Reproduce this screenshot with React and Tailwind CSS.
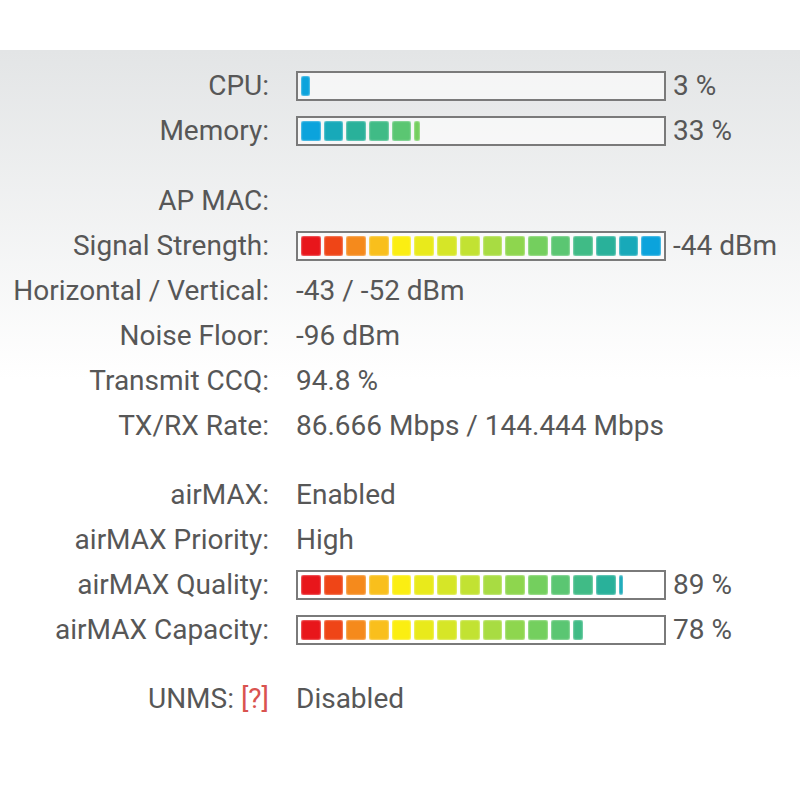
import React from "react";

const PALETTE = [
  "#e8161b",
  "#ef4517",
  "#f58a1c",
  "#f9bf1c",
  "#fbee12",
  "#e9ea1b",
  "#d6e627",
  "#c2e232",
  "#a8dc42",
  "#8ed64e",
  "#74cf5e",
  "#5bc672",
  "#40bb86",
  "#29b19a",
  "#18a9b9",
  "#0ba3dc",
];

function Bar({ percent, reverse = false }) {
  const colors = reverse ? [...PALETTE].reverse() : PALETTE;
  const filled = (percent / 100) * 16;
  return (
    <div className="flex h-[30px] w-[370px] gap-[3px] border-2 border-[#7a7a7a] bg-white/60 p-[3px]">
      {colors.map((c, i) => {
        const part = Math.max(0, Math.min(1, filled - i));
        if (part <= 0) return <div key={i} className="flex-1" />;
        return (
          <div key={i} className="flex-1">
            <div
              className="h-full rounded-[2px] shadow-[0_0_2px_rgba(255,255,255,0.9)_inset]"
              style={{ width: `${Math.max(part * 100, 22)}%`, backgroundColor: c }}
            />
          </div>
        );
      })}
    </div>
  );
}

function Row({ label, children }) {
  return (
    <div className="flex h-[45px] items-center">
      <div className="w-[269px] shrink-0 text-right">{label}</div>
      <div className="flex items-center pl-[27px]">{children}</div>
    </div>
  );
}

function BarRow({ label, percent, text, reverse }) {
  return (
    <Row label={label}>
      <Bar percent={percent} reverse={reverse} />
      <span className="ml-[7px]">{text}</span>
    </Row>
  );
}

export default function App() {
  return (
    <div
      className="min-h-[800px] bg-white text-[28px] leading-none text-[#575757]"
      style={{ fontFamily: "Roboto, 'Liberation Sans', sans-serif" }}
    >
      <div className="h-[50px]" />
      <div className="bg-gradient-to-b from-[#e3e5e6] via-white via-[45%] to-white pt-[13px] pb-[60px]">
        <BarRow label="CPU:" percent={3} text="3 %" reverse />
        <BarRow label="Memory:" percent={33} text="33 %" reverse />
        <div className="h-[25px]" />
        <Row label="AP MAC:" />
        <BarRow label="Signal Strength:" percent={100} text="-44 dBm" />
        <Row label="Horizontal / Vertical:">-43 / -52 dBm</Row>
        <Row label="Noise Floor:">-96 dBm</Row>
        <Row label="Transmit CCQ:">94.8 %</Row>
        <Row label="TX/RX Rate:">86.666 Mbps / 144.444 Mbps</Row>
        <div className="h-[24px]" />
        <Row label="airMAX:">Enabled</Row>
        <Row label="airMAX Priority:">High</Row>
        <BarRow label="airMAX Quality:" percent={89} text="89 %" />
        <BarRow label="airMAX Capacity:" percent={78} text="78 %" />
        <div className="h-[24px]" />
        <Row
          label={
            <>
              UNMS: <span className="text-[#d9534f]">[?]</span>
            </>
          }
        >
          Disabled
        </Row>
      </div>
    </div>
  );
}
